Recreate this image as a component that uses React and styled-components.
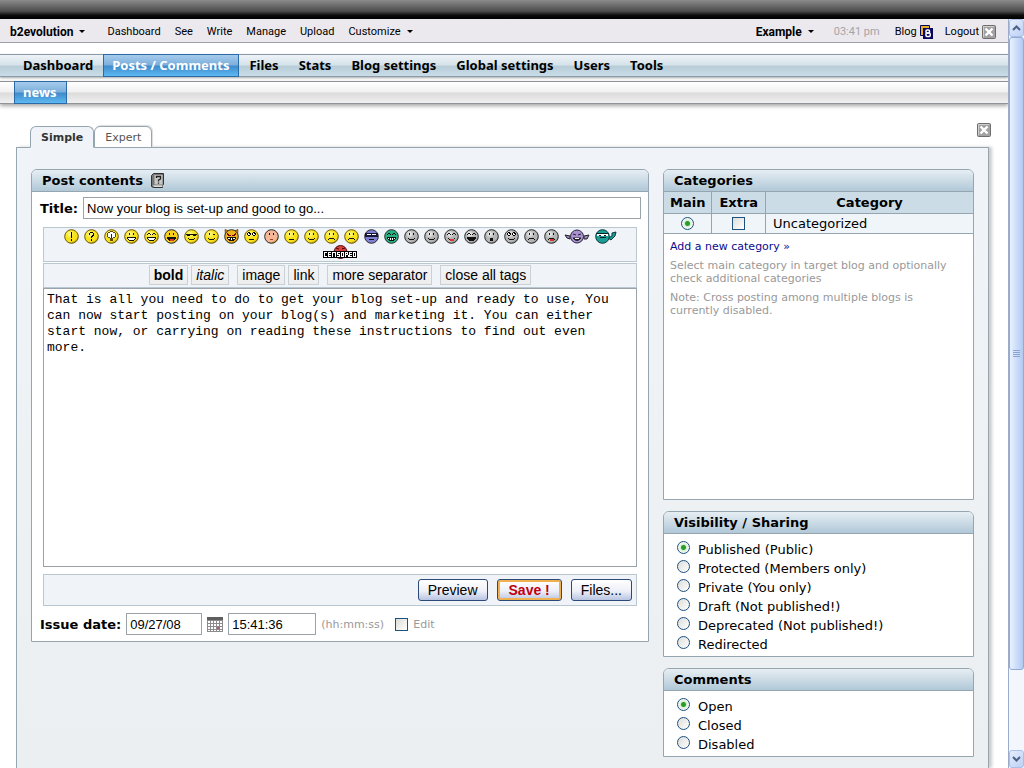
import { useState } from "react";
import styled, { createGlobalStyle, css } from "styled-components";

const verdana = `"DejaVu Sans", Verdana, sans-serif`;
const arial = `"Liberation Sans", Arial, sans-serif`;
const tahoma = `"Noto Sans", Tahoma, sans-serif`;
const line = "#95a6b0";
const softLine = "#b9c7d0";

const GlobalStyle = createGlobalStyle`
  * {
    box-sizing: border-box;
  }
  body {
    margin: 0;
    background: #fff;
    color: #000;
    font-family: ${verdana};
    font-size: 13px;
  }
  svg {
    display: block;
    flex: none;
  }
`;

const Screen = styled.div`
  height: 100vh;
  display: flex;
  flex-direction: column;
  overflow: hidden;
`;

const TopStrip = styled.div`
  flex: none;
  height: 19px;
  background: linear-gradient(#8c8c8c, #4a4a4a 60%, #0c0c0c 80%, #000);
`;

const Viewport = styled.div`
  flex: 1;
  min-height: 0;
  display: flex;
`;

const Page = styled.div`
  flex: 1;
  min-width: 0;
  display: flex;
  flex-direction: column;
`;

const Toolbar = styled.header`
  height: 24px;
  display: flex;
  align-items: center;
  justify-content: space-between;
  padding: 2px 12px 0 10px;
  background: #ece9ee;
  border-bottom: 1px solid #9a9fa8;
  font-family: Roboto, ${arial};
  font-size: 11px;
`;

const ToolGroup = styled.div`
  display: flex;
  align-items: center;
  gap: ${(p) => p.$gap};
`;

const ToolLink = styled.a`
  display: flex;
  align-items: center;
  gap: ${(p) => (p.$icon ? "3px" : "6px")};
  color: #000;
  text-decoration: none;
  white-space: nowrap;
  ${(p) =>
    p.$strong &&
    css`
      font-size: 12px;
      font-weight: 700;
      margin-right: 8px;
    `}
`;

const Clock = styled.span`
  margin-right: 3px;
  color: #a5a3a8;
`;

const MainNav = styled.nav`
  display: flex;
  height: 23px;
  margin-top: 11px;
  padding-left: 13px;
  border-top: 1px solid #8a99a8;
  border-bottom: 1px solid #8b9cab;
  background: linear-gradient(#eef3f7, #d6e3ea 46%, #b9cdd8 54%, #c9dde8);
  box-shadow: 0 1px 2px #a9a9a9;
  font-family: ${tahoma};
`;

const SubNav = styled(MainNav)`
  margin-top: 4px;
  padding-left: 14px;
  border-color: #8f9296;
  background: linear-gradient(#fff, #f1f1f1 46%, #dcdcdc 54%, #f0f0f0);
  box-shadow: 0 2px 4px #a5a5a5;
`;

const NavLink = styled.a`
  display: flex;
  align-items: center;
  margin: -1px 0;
  padding: 0 9px 1px;
  border: 1px solid transparent;
  color: #000;
  font-size: 13px;
  font-weight: 700;
  line-height: 20px;
  white-space: nowrap;
  text-decoration: none;
  ${(p) =>
    p.$active &&
    css`
      padding: 0 9px 1px 8px;
      color: #fff;
      border-color: #2b6aa6;
      background: linear-gradient(#a6cbec, #7db0dc 46%, #3f8ccc 54%, #5db9f2);
    `}
`;

const TabBar = styled.div`
  display: flex;
  align-items: flex-end;
  margin: 19px 17px -1px 30px;
  position: relative;
`;

const Tab = styled.button`
  height: 22px;
  padding: 0 10px;
  border: 1px solid ${line};
  border-radius: 6px 6px 0 0;
  background: #fff;
  color: #555;
  font-family: ${verdana};
  font-size: 11px;
  box-shadow: 1px -1px 1px #ddd;
  ${(p) =>
    p.$active &&
    css`
      color: #333;
      font-weight: 700;
      background: #f0f4f8;
      border-bottom-color: #f0f4f8;
      box-shadow: none;
    `}
`;

const IconButton = styled.button`
  margin-left: auto;
  margin-bottom: 11px;
  padding: 0;
  border: 0;
  background: none;
`;

const Panel = styled.main`
  flex: 1;
  display: grid;
  grid-template-columns: minmax(0, 1fr) 311px;
  align-items: start;
  gap: 14px;
  margin: 0 19px 0 16px;
  padding: 21px 14px 0;
  border: 1px solid ${line};
  border-bottom: 0;
  background: linear-gradient(#f0f4f8, #eceff1);
  box-shadow: 3px 0 3px #ccc;
`;

const Side = styled.div`
  display: grid;
  gap: 11px;
`;

const Card = styled.section`
  min-width: 0;
  border: 1px solid ${line};
  border-radius: 6px 6px 0 0;
  background: #fff;
  overflow: hidden;
`;

const CardTitle = styled.h2`
  display: flex;
  align-items: center;
  gap: 8px;
  height: 22px;
  margin: 0;
  padding: 0 10px;
  border-bottom: 1px solid ${line};
  background: linear-gradient(#e6eef3, #b1c8d8);
  font-size: 13px;
  font-weight: 700;
`;

const Editor = styled.form`
  display: flex;
  flex-direction: column;
  padding: 5px 7px 6px 8px;
`;

const Field = styled.div`
  display: flex;
  align-items: center;
  gap: 5px;
`;

const FieldLabel = styled.label`
  font-weight: 700;
`;

const TextInput = styled.input`
  flex: ${(p) => (p.$width ? "none" : "1")};
  width: ${(p) => p.$width || "auto"};
  min-width: 0;
  height: 22px;
  padding: 0 3px;
  border: 1px solid #9aa3aa;
  background: #fff;
  color: #000;
  font-family: ${arial};
  font-size: 13px;
`;

const Box = styled.div`
  display: flex;
  flex-wrap: wrap;
  margin: 0 4px 0 3px;
  border: 1px solid ${softLine};
  background: #f0f4f8;
`;

const SmileyBox = styled(Box)`
  justify-content: center;
  gap: 0 5px;
  height: 35px;
  margin-top: 8px;
  padding: 0 4px;
`;

const SmileyButton = styled.button`
  height: 16px;
  padding: 0;
  border: 0;
  background: none;
`;

const TagBox = styled(Box)`
  justify-content: center;
  gap: 8px;
  margin-top: 1px;
  padding: 1px 0 2px;
`;

const TagGroup = styled.div`
  display: flex;
  gap: 3px;
`;

const TagButton = styled.button`
  height: 20px;
  padding: 0 4px;
  border: 1px solid #c9d0d6;
  background: linear-gradient(#f3f4f6, #ededee);
  color: #000;
  font-family: ${arial};
  font-size: 14px;
  font-weight: ${(p) => (p.$kind === "bold" ? 700 : 400)};
  font-style: ${(p) => (p.$kind === "italic" ? "italic" : "normal")};
`;

const Body = styled.textarea`
  display: block;
  margin: 0 4px 0 3px;
  padding: 3px 16px 2px 3px;
  border: 1px solid #9aa3aa;
  resize: none;
  overflow: hidden;
  color: #000;
  font-family: "Liberation Mono", "Courier New", monospace;
  font-size: 13px;
  line-height: 16px;
`;

const ActionBox = styled(Box)`
  justify-content: flex-end;
  gap: 9px;
  margin-top: 7px;
  margin-bottom: 7px;
  padding: 4px;
`;

const ActionButton = styled.button`
  height: 22px;
  padding: 0 9px;
  border: 1px solid #2c4a78;
  border-radius: 3px;
  background: linear-gradient(#fff, #eef0f8 55%, #b9c4e2);
  color: #000;
  font-family: ${arial};
  font-size: 14px;
  ${(p) =>
    p.$primary &&
    css`
      padding: 0 11px;
      color: #c00010;
      font-weight: 700;
      box-shadow: inset 0 0 0 2px #f0b050;
    `}
`;

const Hint = styled.span`
  min-width: 69px;
  color: #999;
  font-size: 11px;
`;

const CheckBox = styled.input`
  appearance: none;
  flex: none;
  width: 13px;
  height: 13px;
  margin: 0;
  border: 1px solid #1c5180;
  background: linear-gradient(135deg, #dcdcd7, #fff);
`;

const Radio = styled(CheckBox)`
  border-radius: 50%;
  &:checked {
    background: radial-gradient(circle, #2a9a2a 0 2px, #d4f0d0 3px, #f6f6f4 5px);
  }
`;

const CategoryTable = styled.table`
  width: 100%;
  border-collapse: collapse;
  th,
  td {
    height: 20px;
    padding: 0 7px;
    border-right: 1px solid ${line};
    border-bottom: 1px solid ${line};
    background: #f0f5f9;
    text-align: center;
    font-size: 13px;
  }
  th {
    height: 21px;
    background: #ccdce6;
  }
  th:first-child {
    padding: 0 6px;
  }
  th:last-child,
  td:last-child {
    width: 100%;
    border-right: 0;
  }
  td:last-child {
    text-align: left;
  }
  input {
    display: block;
    margin: 0 auto;
  }
`;

const CategoryNotes = styled.div`
  min-height: 265px;
  padding: 6px 16px 6px 6px;
  font-size: 11px;
  line-height: 13px;
  a {
    display: block;
    margin: 0 0 6px;
    color: #0a0a8c;
    text-decoration: none;
  }
  p {
    margin: 0 0 6px;
    color: #999;
  }
`;

const Choices = styled.div`
  padding: 6px 13px 2px;
`;

const Choice = styled.label`
  display: flex;
  align-items: center;
  gap: 8px;
  height: 19px;
  input {
    margin-bottom: 3px;
  }
`;

const ScrollBar = styled.div`
  flex: none;
  width: 16px;
  display: flex;
  flex-direction: column;
  border-left: 1px solid #9aabcc;
  background: #f3f7fd;
`;

const ScrollArrow = styled.div`
  flex: none;
  height: 18px;
  display: flex;
  align-items: center;
  justify-content: center;
  border: 1px solid #a9bfe8;
  border-radius: 3px;
  background: linear-gradient(135deg, #e6eefc, #bdd0f6);
`;

const Thumb = styled.div`
  flex: 632;
  display: flex;
  align-items: center;
  justify-content: center;
  border: 1px solid #93abd4;
  border-radius: 3px;
  background: linear-gradient(90deg, #e8f1fd, #c7dafa 60%, #b2caf0);
`;

const Track = styled.div`
  flex: 80;
`;

const Arrow = () => (
  <svg width="6" height="4" viewBox="0 0 6 4">
    <path d="M0 0h6L3 3z" fill="#000" />
  </svg>
);

const CloseIcon = () => (
  <svg width="14" height="14" viewBox="0 0 14 14">
    <rect x=".5" y=".5" width="13" height="13" rx="1" fill="#a2a2a2" stroke="#6e6e6e" />
    <path d="M1.5 12V1.5H12" fill="none" stroke="#cfcfcf" />
    <path d="M3.5 3.5l7 7M10.5 3.5l-7 7" stroke="#fff" strokeWidth="2.4" />
  </svg>
);

const BlogIcon = () => (
  <svg width="13" height="14" viewBox="0 0 13 14">
    <path d="M.5.5h9v10h-9z" fill="#e8ae28" stroke="#0a0a50" />
    <path d="M3 3h10v11H3z" fill="#08085e" />
    <g fill="none" stroke="#fff" strokeWidth="1.5">
      <rect x="6" y="5" width="3.500" height="3" rx="1" />
      <rect x="6" y="8" width="4.200" height="3.500" rx="1" />
    </g>
  </svg>
);

const HelpIcon = () => (
  <svg width="13" height="15" viewBox="0 0 13 15">
    <path d="M2.5.5h10v11l-1 1v2h-9l-2-1V2.500z" fill="#777" stroke="#333" />
    <path d="M3.500 2h8v9.500h-8z" fill="#c6c6c6" />
    <path d="M1.500 12.500h10v1.200h-8z" fill="#fff" />
    <path d="M5.500 5V3.500h4V6l-2 1.200V8.500M7.500 9.500v1.200" fill="none" stroke="#222" strokeWidth="1.300" />
  </svg>
);

const CalendarIcon = () => (
  <svg width="16" height="15" viewBox="0 0 16 15">
    <path d="M0 0h16v15H0z" fill="#8b8b8b" />
    <path d="M0 0h16v3H0z" fill="#5e5e5e" />
    <path d="M2 4v10M5 4v10M8 4v10M11 4v10M14 4v10" stroke="#fff" strokeWidth="2" strokeDasharray="2 1" />
    <path d="M10 10h3v2h-3z" fill="#b0607a" />
  </svg>
);

const eyes = {
  dots: "M5 4h1v2H5zM9 4h1v2H9z",
  arcs: "M3 5h1V4h2v1h1v1H6V5H4v1H3zM8 5h1V4h2v1h1v1h-1V5H9v1H8z",
  shades: "M2 5h11v1h-1v1H9V6H6v1H3V6H2z",
  wink: "M5 4h1v2H5zM9 5h2v1H9z",
  angry: "M3 4h1v1h1v1h2v1H4V6H3zM12 4h-1v1h-1v1H8v1h3V6h1z",
};

const mouths = {
  smile: "M4 9h1v1h5V9h1v1h-1v1H5v-1H4z",
  flat: "M5 10h5v1H5z",
  skew: "M4 9h1v1h3v1H5v-1H4zM8 10h2V9h1v1h-1v1H8z",
  sad: "M4 11v-1h1V9h5v1h1v1h-1v-1H5v1z",
  open: "M3 8h9v2h-1v1h-1v1H5v-1H4v-1H3z",
  small: "M6 10h3v1H6z",
  oh: "M6 9h3v3H6z",
};

const yellow = "#f7e31c";
const gray = "#b5b5b5";
const green = "#28b284";

const glints = {
  [yellow]: "#fffb9a",
  [gray]: "#f6f6f6",
};

const Smiley = ({ name, color, eye, mouth, teeth, tongue, ring, horns, sign, mask }) => {
  const shade = `face-${name.replace(/ /g, "-")}`;
  return (
    <svg width="15" height="15" viewBox="0 0 15 15">
      <defs>
        <radialGradient id={shade} cx=".38" cy=".32" r=".7">
          <stop offset="0" stopColor={glints[color] || color} />
          <stop offset=".45" stopColor={color} />
          <stop offset=".8" stopColor={color} />
          <stop offset="1" stopColor={color === gray ? "#7c7c7c" : "#b98a10"} />
        </radialGradient>
      </defs>
      {horns && <path d="M1 .5l4 1.500-3.500 4zM14 .5l-4 1.500 3.500 4z" fill="#e38b18" stroke="#573400" strokeWidth=".7" />}
      <circle
        cx="7.5"
        cy="7.5"
        r="6.8"
        fill={mask || color === green ? color : `url(#${shade})`}
        stroke={color === yellow ? "#6b5708" : "#2a2a2a"}
      />
      <g shapeRendering="crispEdges">
        {sign === "bang" && <path d="M7 3h1v6H7zM7 10h1v2H7z" />}
        {sign === "ask" && <path d="M5 4h1V3h3v1h1v3H9v1H8v1H7V7h1V6h1V4H6v2H5zM7 10h1v2H7z" />}
        {sign === "idea" && (
          <>
            <path d="M6 2h3v1h2v1h1v4h-1v1H9v3H6V9H4V8H3V4h1V3h2z" fill="#5c4c10" />
            <path d="M6 3h3v1h2v4H9v1H6V8H4V4h2z" fill="#fff" />
            <path d="M7 5h1v4H7z" fill="#222" />
          </>
        )}
        {ring && (
          <>
            <path d="M4 3h2v1h1v2H6v1H4V6H3V4h1zM9 3h2v1h1v2h-1v1H9V6H8V4h1z" />
            <path d="M4 4h2v2H4zM9 4h2v2H9z" fill="#fff" />
            <path d="M5 4h1v1H5zM10 4h1v1h-1z" />
          </>
        )}
        {mask && (
          <>
            <path d="M1 4h13v4H1z" fill="#16163a" />
            <path d="M3 5h4v1H3zM8 5h4v1H8z" fill="#fff" />
          </>
        )}
        {eye && <path d={eyes[eye]} fill={horns ? "#700" : "#111"} />}
        {mouth && <path d={mouths[mouth]} fill={mouth === "small" ? "#a04028" : "#111"} />}
        {teeth && <path d={horns ? "M4 9h2v1H4zM7 9h1v2H7zM9 9h2v1H9z" : "M4 9h7v1H4zM5 10h5v1H5z"} fill="#fff" />}
        {color === green && <path d="M5 9h1v2H5zM7 9h1v2H7zM9 9h1v2H9z" fill="#123" />}
        {tongue && <path d="M6 10h4v2H6z" fill="#d8382c" />}
      </g>
    </svg>
  );
};

const AlienIcon = () => (
  <svg width="26" height="15" viewBox="0 0 26 15">
    <path d="M6 7L1 6l2 3 3 1zM20 7l5-1-2 4-3 0z" fill="#9d8cc0" stroke="#222" />
    <circle cx="13" cy="7.500" r="6.500" fill="#a990cf" stroke="#2a2540" />
    <path d="M9 5l3 1M17 5l-3 1M9 9q4 5 8 0z" fill="#222" stroke="#222" />
    <path d="M11 9h4v1h-4z" fill="#fff" />
  </svg>
);

const NinjaIcon = () => (
  <svg width="22" height="15" viewBox="0 0 22 15">
    <path d="M13 9l4-2 0-3 4-1-1 4-4 4z" fill="#1b9c94" stroke="#0a3a38" />
    <circle cx="7.500" cy="7.500" r="6.800" fill="#1b9c94" stroke="#0a3a38" />
    <path d="M2 5h11v2H2z" fill="#fff" />
    <path d="M1 4h13v1H1zM4 6h2v1H4zM9 6h2v1H9zM5 8h6v1H5z" fill="#0a2524" />
  </svg>
);

// pixel lettering on the banner is 3x5 blocks
const CensoredIcon = () => (
  <svg width="34" height="15" viewBox="0 0 34 15">
    <circle cx="17.500" cy="7" r="6.500" fill="#d8403c" stroke="#4a0d0d" />
    <path d="M13 3l3 1M22 3l-3 1" stroke="#400" />
    <rect y="6" width="34" height="7" />
    <g fill="none" stroke="#fff" shapeRendering="crispEdges">
      <path d="M4 7.500H1.500v4H4M8 7.500H5.500v4H8M5.500 9.500h2" />
      <path d="M9.500 12V7.500h3V12M17 7.500h-2.500v2h2v2H14M18.500 7.500h2v4h-2z" />
      <path d="M22.500 12V7.500h2v2h-2M25 10v2M29 7.500h-2.500v4H29M26.500 9.500h2M30.500 7.500h2v4h-2z" />
    </g>
  </svg>
);

const smileys = [
  { name: "exclamation", color: yellow, sign: "bang" },
  { name: "question", color: yellow, sign: "ask" },
  { name: "idea", color: yellow, sign: "idea" },
  { name: "smile", color: yellow, eye: "dots", mouth: "open", teeth: true },
  { name: "grin", color: yellow, eye: "arcs", mouth: "open", teeth: true },
  { name: "laugh", color: "#f8cf1c", eye: "dots", mouth: "open", tongue: true },
  { name: "cool", color: yellow, eye: "shades", mouth: "smile" },
  { name: "wink", color: yellow, eye: "wink", mouth: "smile" },
  { name: "devil", color: "#efb41c", eye: "angry", mouth: "open", teeth: true, horns: true },
  { name: "rolling eyes", color: yellow, ring: true, mouth: "flat" },
  { name: "blush", color: "#f5b795", eye: "dots", mouth: "small" },
  { name: "neutral", color: yellow, eye: "dots", mouth: "flat" },
  { name: "confused", color: yellow, eye: "dots", mouth: "skew" },
  { name: "sad", color: yellow, eye: "dots", mouth: "sad" },
  { name: "worried", color: yellow, eye: "dots", mouth: "sad" },
  { name: "masked", color: "#8080d4", mask: true, mouth: "flat" },
  { name: "green grin", color: green, eye: "arcs", mouth: "open", teeth: true },
  { name: "gray smile", color: gray, eye: "dots", mouth: "smile" },
  { name: "gray happy", color: gray, eye: "dots", mouth: "smile" },
  { name: "gray tongue", color: gray, eye: "arcs", mouth: "smile", tongue: true },
  { name: "gray laugh", color: gray, eye: "arcs", mouth: "open" },
  { name: "gray surprised", color: gray, eye: "dots", mouth: "oh" },
  { name: "gray rolling", color: gray, ring: true, mouth: "smile" },
  { name: "gray confused", color: gray, eye: "dots", mouth: "sad" },
  { name: "gray sick", color: gray, eye: "dots", mouth: "sad", tongue: true },
];

const mainLinks = ["Dashboard", "Posts / Comments", "Files", "Stats", "Blog settings", "Global settings", "Users", "Tools"];
const visibility = [
  "Published (Public)",
  "Protected (Members only)",
  "Private (You only)",
  "Draft (Not published!)",
  "Deprecated (Not published!)",
  "Redirected",
];

const RadioCard = ({ title, name, options }) => (
  <Card>
    <CardTitle>{title}</CardTitle>
    <Choices>
      {options.map((option, i) => (
        <Choice key={option}>
          <Radio type="radio" name={name} defaultChecked={i === 0} />
          {option}
        </Choice>
      ))}
    </Choices>
  </Card>
);

const App = () => {
  const [tab, setTab] = useState("Simple");

  return (
    <Screen>
      <GlobalStyle />
      <TopStrip />
      <Viewport>
        <Page>
          <Toolbar>
            <ToolGroup $gap="14px">
              <ToolLink href="#" $strong>
                b2evolution <Arrow />
              </ToolLink>
              {["Dashboard", "See", "Write", "Manage", "Upload"].map((item) => (
                <ToolLink href="#" key={item}>
                  {item}
                </ToolLink>
              ))}
              <ToolLink href="#">
                Customize <Arrow />
              </ToolLink>
            </ToolGroup>
            <ToolGroup $gap="12px">
              <ToolLink href="#" $strong>
                Example <Arrow />
              </ToolLink>
              <Clock>03:41 pm</Clock>
              <ToolLink href="#" $icon>
                Blog <BlogIcon />
              </ToolLink>
              <ToolLink href="#" $icon>
                Logout <CloseIcon />
              </ToolLink>
            </ToolGroup>
          </Toolbar>

          <MainNav>
            {mainLinks.map((item) => (
              <NavLink href="#" key={item} $active={item === "Posts / Comments"}>
                {item}
              </NavLink>
            ))}
          </MainNav>
          <SubNav>
            <NavLink href="#" $active>
              news
            </NavLink>
          </SubNav>

          <TabBar>
            {["Simple", "Expert"].map((item) => (
              <Tab key={item} type="button" $active={tab === item} onClick={() => setTab(item)}>
                {item}
              </Tab>
            ))}
            <IconButton type="button" aria-label="Close">
              <CloseIcon />
            </IconButton>
          </TabBar>

          <Panel>
            <Card>
              <CardTitle>
                Post contents <HelpIcon />
              </CardTitle>
              <Editor onSubmit={(e) => e.preventDefault()}>
                <Field>
                  <FieldLabel htmlFor="title">Title:</FieldLabel>
                  <TextInput id="title" defaultValue="Now your blog is set-up and good to go..." />
                </Field>
                <SmileyBox>
                  {smileys.map((face) => (
                    <SmileyButton type="button" key={face.name} aria-label={face.name}>
                      <Smiley {...face} />
                    </SmileyButton>
                  ))}
                  <SmileyButton type="button" aria-label="alien">
                    <AlienIcon />
                  </SmileyButton>
                  <SmileyButton type="button" aria-label="ninja">
                    <NinjaIcon />
                  </SmileyButton>
                  <SmileyButton type="button" aria-label="censored">
                    <CensoredIcon />
                  </SmileyButton>
                </SmileyBox>
                <TagBox>
                  <TagGroup>
                    <TagButton type="button" $kind="bold">
                      bold
                    </TagButton>
                    <TagButton type="button" $kind="italic">
                      italic
                    </TagButton>
                  </TagGroup>
                  <TagGroup>
                    <TagButton type="button">image</TagButton>
                    <TagButton type="button">link</TagButton>
                  </TagGroup>
                  <TagButton type="button">more separator</TagButton>
                  <TagButton type="button">close all tags</TagButton>
                </TagBox>
                <Body
                  rows={17}
                  aria-label="Post body"
                  spellCheck={false}
                  defaultValue="That is all you need to do to get your blog set-up and ready to use, You can now start posting on your blog(s) and marketing it. You can either start now, or carrying on reading these instructions to find out even more."
                />
                <ActionBox>
                  <ActionButton type="button">Preview</ActionButton>
                  <ActionButton type="submit" $primary>
                    Save !
                  </ActionButton>
                  <ActionButton type="button">Files...</ActionButton>
                </ActionBox>
                <Field>
                  <FieldLabel htmlFor="date">Issue date:</FieldLabel>
                  <TextInput id="date" $width="76px" defaultValue="09/27/08" />
                  <CalendarIcon />
                  <TextInput $width="88px" aria-label="Issue time" defaultValue="15:41:36" />
                  <Hint>(hh:mm:ss)</Hint>
                  <CheckBox type="checkbox" id="edit-date" />
                  <Hint as="label" htmlFor="edit-date">
                    Edit
                  </Hint>
                </Field>
              </Editor>
            </Card>

            <Side>
              <Card>
                <CardTitle>Categories</CardTitle>
                <CategoryTable>
                  <thead>
                    <tr>
                      <th>Main</th>
                      <th>Extra</th>
                      <th>Category</th>
                    </tr>
                  </thead>
                  <tbody>
                    <tr>
                      <td>
                        <Radio type="radio" name="main-category" aria-label="Main category" defaultChecked />
                      </td>
                      <td>
                        <CheckBox type="checkbox" aria-label="Extra category" />
                      </td>
                      <td>Uncategorized</td>
                    </tr>
                  </tbody>
                </CategoryTable>
                <CategoryNotes>
                  <a href="#">Add a new category »</a>
                  <p>Select main category in target blog and optionally check additional categories</p>
                  <p>Note: Cross posting among multiple blogs is currently disabled.</p>
                </CategoryNotes>
              </Card>
              <RadioCard title="Visibility / Sharing" name="visibility" options={visibility} />
              <RadioCard title="Comments" name="comments" options={["Open", "Closed", "Disabled"]} />
            </Side>
          </Panel>
        </Page>

        <ScrollBar aria-hidden="true">
          <ScrollArrow>
            <svg width="9" height="6" viewBox="0 0 9 6">
              <path d="M1 5l3.500-3.500L8 5" fill="none" stroke="#4d6185" strokeWidth="2" />
            </svg>
          </ScrollArrow>
          <Thumb>
            <svg width="7" height="8" viewBox="0 0 7 8">
              <path d="M0 .5h7M0 2.500h7M0 4.500h7M0 6.500h7" stroke="#8ba4d0" />
            </svg>
          </Thumb>
          <Track />
          <ScrollArrow>
            <svg width="9" height="6" viewBox="0 0 9 6">
              <path d="M1 1l3.500 3.500L8 1" fill="none" stroke="#4d6185" strokeWidth="2" />
            </svg>
          </ScrollArrow>
        </ScrollBar>
      </Viewport>
    </Screen>
  );
};

export default App;
